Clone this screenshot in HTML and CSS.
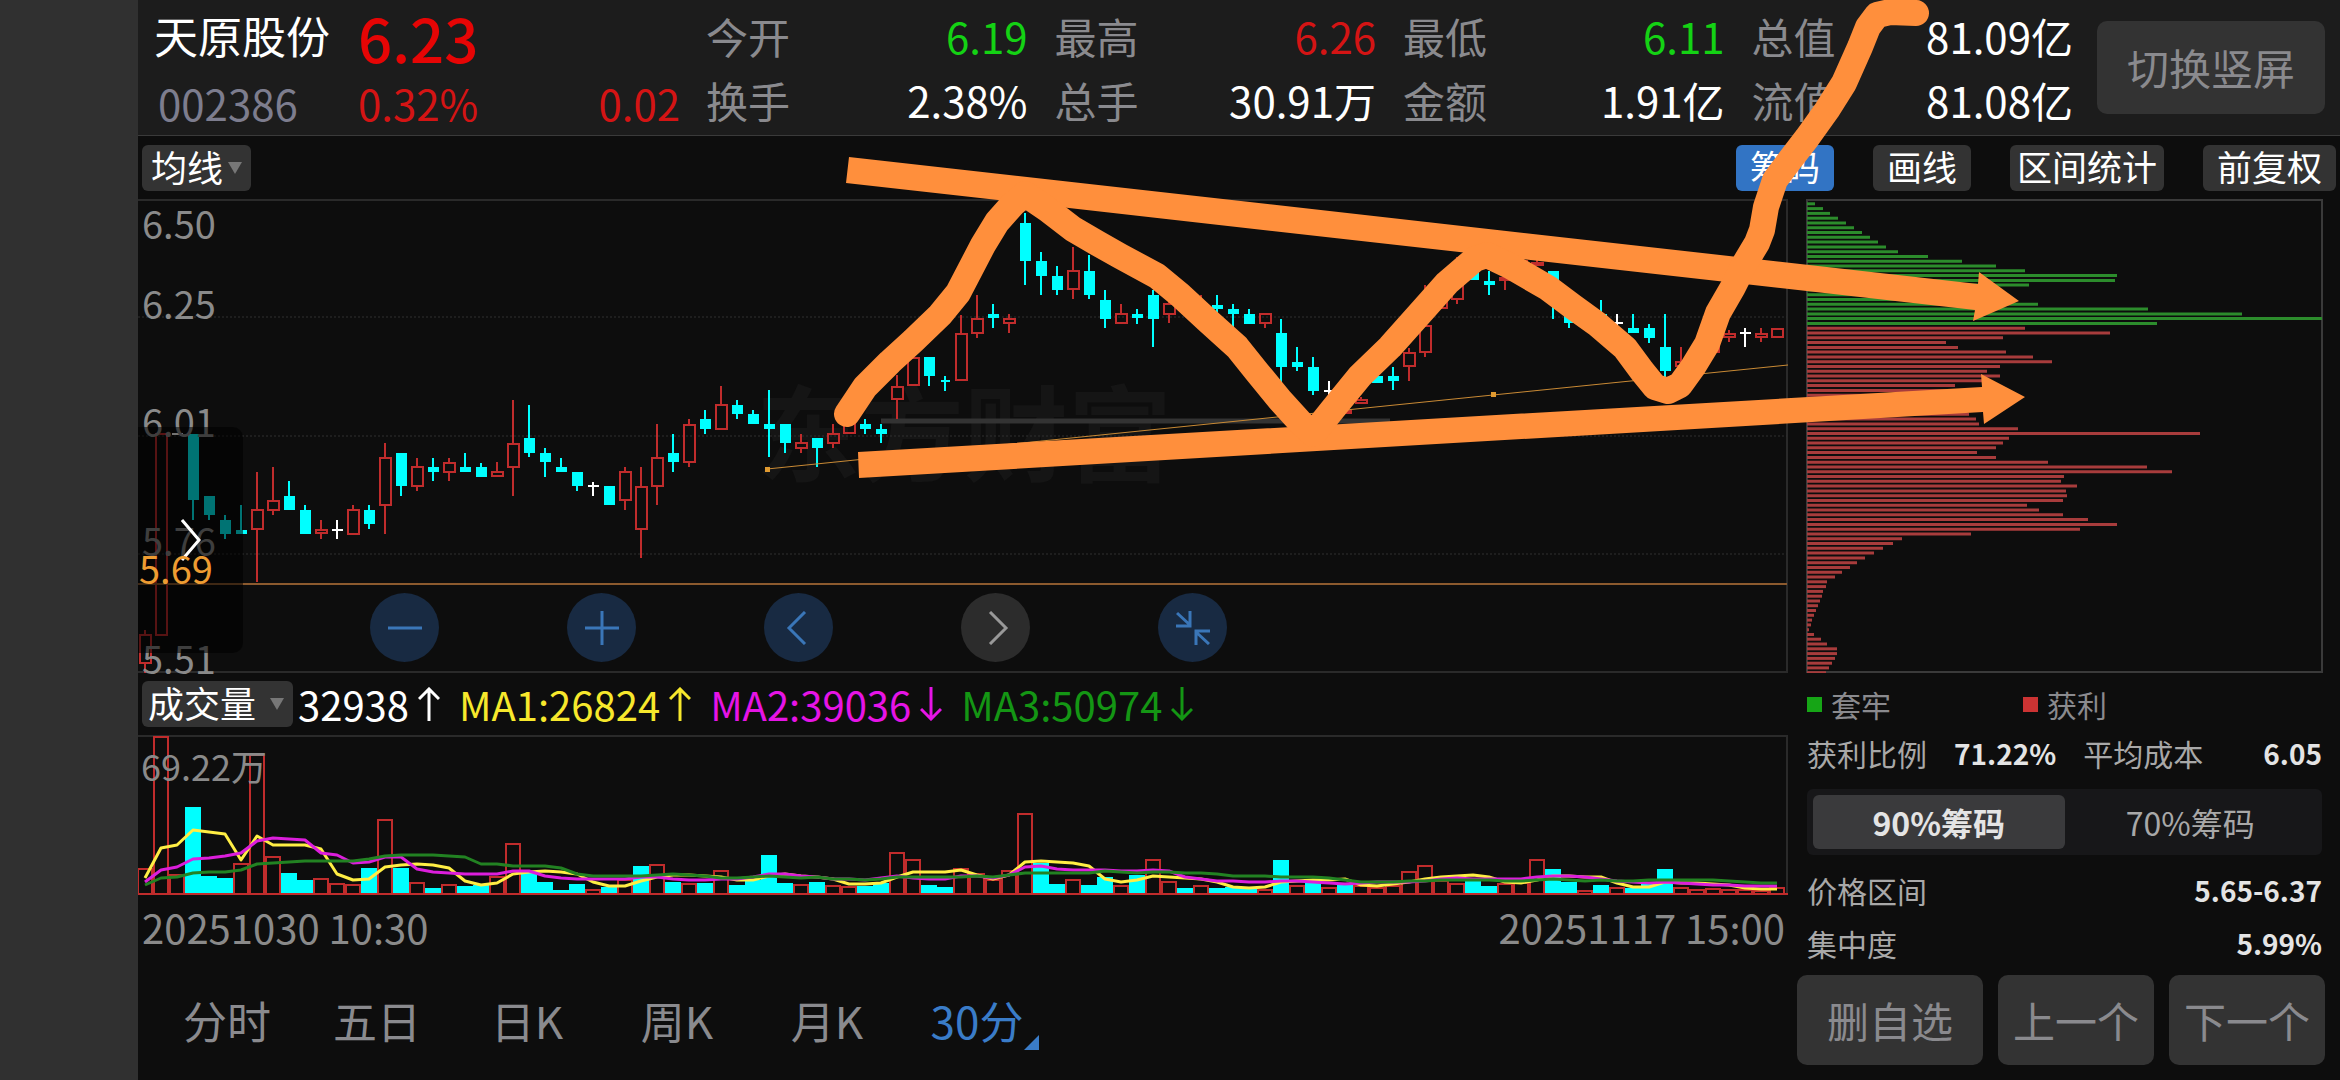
FILE: index.html
```html
<!DOCTYPE html>
<html lang="zh-CN">
<head>
    <meta charset="UTF-8">
    <meta name="viewport" content="width=device-width, initial-scale=1.0">
    <title>天原股份 002386</title>
    <link rel="stylesheet" href="styles.css">
</head>
<body>
    <div class="app">
        <main class="screen">
            <header class="header">
                <div class="stock">
                    <h1>天原股份</h1>
                    <span class="code">002386</span>
                </div>
                <div class="price">
                    <strong>6.23</strong>
                    <div class="change"><span>0.32%</span><span>0.02</span></div>
                </div>
                <div class="quotes">
                    <div class="quote"><span>今开</span><b class="down">6.19</b></div>
                    <div class="quote"><span>最高</span><b class="up">6.26</b></div>
                    <div class="quote"><span>最低</span><b class="down">6.11</b></div>
                    <div class="quote"><span>总值</span><b>81.09亿</b></div>
                    <div class="quote"><span>换手</span><b>2.38%</b></div>
                    <div class="quote"><span>总手</span><b>30.91万</b></div>
                    <div class="quote"><span>金额</span><b>1.91亿</b></div>
                    <div class="quote"><span>流值</span><b>81.08亿</b></div>
                </div>
                <button class="big-btn rotate-btn">切换竖屏</button>
            </header>

            <div class="toolbar">
                <div class="picker">
                    <select aria-label="主图指标"><option>均线</option></select>
                    <svg viewBox="0 0 14 12"><path d="M0 0h14L7 12z"/></svg>
                </div>
                <div class="tools">
                    <button class="tool active">筹码</button>
                    <button class="tool">画线</button>
                    <button class="tool wide">区间统计</button>
                    <button class="tool">前复权</button>
                </div>
            </div>

            <div class="content">
                <section class="left">
                    <div class="k-chart">
                        <svg id="k-svg" viewBox="138 199 1650 474" preserveAspectRatio="none">
                            <text class="watermark" x="756" y="474">东方财富</text>
                            <path class="frame" d="M138 200H1787V672H138"/>
                            <path class="grid" d="M138 317H1787M138 436H1787M138 554H1787"/>
                            <path class="band" d="M881 421H1390"/>
                            <g id="candles"></g>
                            <path class="cost-line" d="M138 584H1787"/>
                            <path class="trend" d="M767 469L1493 395L1788 365"/>
                            <path class="handle" d="M765 467h5v5h-5zM1491 392h5v5h-5z"/>
                        </svg>
                        <div class="axis">
                            <div><span>6.50</span><span>6.25</span></div>
                            <div><span>6.01</span></div>
                            <div><span>5.76</span></div>
                            <div><span>5.51</span></div>
                        </div>
                        <button class="drawer" aria-label="展开">
                            <svg viewBox="0 0 20 42"><path d="M1 1L18 21L1 41"/></svg>
                        </button>
                        <span class="cost">5.69</span>
                        <div class="zoom-bar">
                            <button aria-label="缩小"><svg viewBox="0 0 34 34"><path d="M0 17H34"/></svg></button>
                            <button aria-label="放大"><svg viewBox="0 0 34 34"><path d="M0 17H34M17 0V34"/></svg></button>
                            <button aria-label="左移"><svg viewBox="0 0 34 34"><path d="M23 1L7 17L23 33"/></svg></button>
                            <button aria-label="右移" class="off"><svg viewBox="0 0 34 34"><path d="M11 1L27 17L11 33"/></svg></button>
                            <button aria-label="收起"><svg viewBox="0 0 34 34"><path d="M1 2L14 14M14 0V15H0M33 33L20 21M20 34V20H34"/></svg></button>
                        </div>
                    </div>

                    <div class="ma-row">
                        <div class="picker vol-picker">
                            <select aria-label="副图指标"><option>成交量</option></select>
                            <svg viewBox="0 0 14 12"><path d="M0 0h14L7 12z"/></svg>
                        </div>
                        <span class="ma">32938<svg viewBox="0 0 22 34"><path d="M11 34V2M1 12L11 2L21 12"/></svg></span>
                        <span class="ma ma1">MA1:26824<svg viewBox="0 0 22 34"><path d="M11 34V2M1 12L11 2L21 12"/></svg></span>
                        <span class="ma ma2">MA2:39036<svg viewBox="0 0 22 34"><path d="M11 0V32M1 22L11 32L21 22"/></svg></span>
                        <span class="ma ma3">MA3:50974<svg viewBox="0 0 22 34"><path d="M11 0V32M1 22L11 32L21 22"/></svg></span>
                    </div>

                    <div class="vol-chart">
                        <svg viewBox="138 735 1650 160" preserveAspectRatio="none">
                            <path class="frame" d="M138 736H1787V895"/>
                            <g id="volumes"></g>
                            <g id="ma-lines"></g>
                        </svg>
                        <span class="vol-max">69.22万</span>
                    </div>

                    <div class="dates"><span>20251030 10:30</span><span>20251117 15:00</span></div>

                    <nav class="tabs">
                        <button>分时</button>
                        <button>五日</button>
                        <button>日K</button>
                        <button>周K</button>
                        <button>月K</button>
                        <button class="active">30分</button>
                    </nav>
                </section>

                <aside class="right">
                    <div class="chip-chart">
                        <svg id="chips" viewBox="1806 199 517 474" preserveAspectRatio="none">
                            <path class="chip-frame" d="M1807 200H2322V672H1807Z"/>
                        </svg>
                    </div>
                    <div class="chip-info">
                        <div class="legend"><span class="lose">套牢</span><span class="win">获利</span></div>
                        <div class="row ratio">
                            <span>获利比例</span><b>71.22%</b><span>平均成本</span><b>6.05</b>
                        </div>
                        <div class="segment">
                            <button class="active">90%筹码</button>
                            <button>70%筹码</button>
                        </div>
                        <div class="row"><span>价格区间</span><b>5.65-6.37</b></div>
                        <div class="row"><span>集中度</span><b>5.99%</b></div>
                    </div>
                    <div class="actions">
                        <button class="big-btn">删自选</button>
                        <button class="big-btn">上一个</button>
                        <button class="big-btn">下一个</button>
                    </div>
                </aside>
            </div>
        </main>

        <!-- hand-drawn marks over the whole screen -->
        <svg class="marks" viewBox="0 0 2340 1080" preserveAspectRatio="none">
            <path d="M849 157L1978 284L1979 272L2019 301L1973 321L1975 310L846 183Z"/>
            <path d="M858 452L1982 387L1981 374L2025 397L1984 424L1983 412L859 478Z"/>
            <polyline points="847,414 865,387 890,362 913,341 940,315 958,293 970,270 983,245 997,222 1013,204 1025,194 1047,209 1073,229 1097,243 1120,256 1157,276 1180,295 1207,320 1237,347 1257,372 1280,400 1300,422 1313,434 1333,409 1360,376 1390,347 1423,310 1447,283 1475,259 1487,255 1510,266 1548,288 1572,306 1597,324 1625,348 1642,371 1655,387 1668,391 1680,385 1693,367 1707,344 1718,313 1733,287 1745,263 1757,243 1762,230 1766,207 1775,180 1790,160 1807,138 1827,110 1844,83 1860,47 1868,27 1877,15 1890,12 1916,13"/>
        </svg>
    </div>
    <script src="script.js"></script>
</body>
</html>
```

FILE: styles.css
```css
:root {
    --bg: #0d0d0d;
    --panel: #1c1c1c;
    --btn: #333333;
    --line: #2a2a2a;
    --label: #8a8a8e;
    --red: #c02c2c;
    --cyan: #00ffff;
    --blue: #3a7cc8;
    --mark: #ff8f3c;
}

* {
    margin: 0;
    padding: 0;
    box-sizing: border-box;
}

body {
    background: #303030;
    color: #fff;
    font-family: "Noto Sans CJK SC", "Noto Sans", sans-serif;
}

button, select {
    font-family: inherit;
    border: none;
    color: inherit;
    cursor: pointer;
}

b {
    font-weight: 400;
}

.app {
    position: relative;
    display: flex;
    min-height: 100vh;
    padding-left: 138px;
    overflow: hidden;
}

.screen {
    flex: 1;
    min-width: 0;
    display: flex;
    flex-direction: column;
    background: var(--bg);
}

/* Header */
.header {
    display: flex;
    align-items: center;
    height: 136px;
    padding: 0 15px 0 16px;
    background: var(--panel);
    border-bottom: 1px solid #3a3a3a;
    font-size: 42px;
    line-height: 64px;
}

.stock {
    width: 204px;
}

.stock h1 {
    margin-bottom: 6px;
    font-size: 44px;
    font-weight: 400;
    line-height: 60px;
}

.code {
    padding-left: 4px;
    color: #7d7d8e;
}

.price {
    width: 322px;
    color: #d41414;
}

.price strong {
    display: block;
    margin-bottom: 2px;
    font-size: 60px;
    font-weight: 500;
    color: #e60505;
}

.stock, .price {
    padding-top: 4px;
}

.change {
    display: flex;
    justify-content: space-between;
}

.quotes {
    flex: 1;
    display: grid;
    grid-template-columns: repeat(4, 1fr);
    column-gap: 27px;
    margin: 0 24px 0 26px;
}

.quote {
    display: flex;
    justify-content: space-between;
    white-space: nowrap;
}

.quote span {
    color: var(--label);
}

.up {
    color: #d41414;
}

.down {
    color: #14d214;
}

.big-btn {
    height: 90px;
    padding-bottom: 2px;
    border-radius: 10px;
    background: var(--btn);
    color: var(--label);
    font-size: 42px;
}

.rotate-btn {
    width: 228px;
    height: 93px;
}

/* Toolbar */
.toolbar {
    display: flex;
    justify-content: space-between;
    align-items: center;
    height: 63px;
    padding: 0 4px;
}

.picker {
    position: relative;
}

.picker select {
    display: block;
    height: 46px;
    padding: 0 27px 4px 9px;
    border-radius: 6px;
    background: var(--btn);
    font-size: 36px;
    line-height: 42px;
    appearance: none;
}

.picker svg {
    position: absolute;
    right: 9px;
    top: 17px;
    width: 14px;
    height: 12px;
    fill: #777;
    pointer-events: none;
}

.tools {
    display: flex;
    gap: 39px;
}

.tool {
    height: 46px;
    padding: 0 14px 4px;
    border-radius: 6px;
    background: var(--btn);
    font-size: 35px;
    line-height: 42px;
}

.tool.wide {
    padding: 0 7px 4px;
}

.tool.active {
    background: #3274c4;
}

/* Content */
.content {
    flex: 1;
    display: grid;
    grid-template-columns: 1fr 552px;
}

.left, .right {
    display: flex;
    flex-direction: column;
    min-width: 0;
}

.k-chart, .vol-chart, .chip-chart {
    position: relative;
    min-height: 0;
}

.k-chart {
    flex: 474 1 0;
}

.vol-chart {
    flex: 160 1 0;
}

.k-chart > svg, .vol-chart > svg, .chip-chart > svg {
    position: absolute;
    inset: 0;
    width: 100%;
    height: 100%;
}

.frame {
    fill: none;
    stroke: var(--line);
    stroke-width: 2;
}

.grid {
    fill: none;
    stroke: #303030;
    stroke-dasharray: 2 2;
}

.watermark {
    font-size: 104px;
    font-weight: 700;
    fill: #151515;
}

.band {
    stroke: #333;
    stroke-width: 5;
}

.cost-line {
    stroke: #8c5a2e;
    stroke-width: 2;
}

.trend {
    fill: none;
    stroke: #c98a35;
}

.handle {
    fill: #e09a30;
}

.red {
    fill: none;
    stroke: var(--red);
    stroke-width: 2;
}

.cyan {
    fill: var(--cyan);
    stroke: var(--cyan);
    stroke-width: 2;
}

.white {
    fill: none;
    stroke: #fff;
    stroke-width: 2;
}

/* every price sits on the grid line below it */
.axis {
    position: absolute;
    inset: 0 auto 0 4px;
    display: grid;
    grid-template-rows: repeat(4, 1fr);
    color: #8a8a8a;
    font-size: 38px;
    line-height: 30px;
}

.axis div {
    display: flex;
    flex-direction: column;
    justify-content: flex-end;
}

.axis div:first-child {
    justify-content: space-between;
    padding-top: 9px;
}

.drawer {
    position: absolute;
    left: 0;
    top: 48%;
    width: 105px;
    height: 226px;
    border-radius: 0 10px 10px 0;
    background: rgba(0, 0, 0, 0.55);
}

.drawer svg {
    display: block;
    width: 20px;
    height: 42px;
    margin-left: 43px;
    fill: none;
    stroke: #fff;
    stroke-width: 3;
}

.cost {
    position: absolute;
    left: 1px;
    bottom: 90px;
    color: #ee9c32;
    font-size: 38px;
    line-height: 30px;
}

.zoom-bar {
    position: absolute;
    left: 232px;
    bottom: 11px;
    display: flex;
    gap: 128px;
}

.zoom-bar button {
    display: flex;
    align-items: center;
    justify-content: center;
    width: 69px;
    height: 69px;
    border-radius: 50%;
    background: #182a42;
    color: #3a76b8;
}

.zoom-bar .off {
    background: #2c2c2c;
    color: #999;
}

.zoom-bar svg {
    width: 34px;
    height: 34px;
    fill: none;
    stroke: currentColor;
    stroke-width: 3;
}

/* MA row */
.ma-row {
    display: flex;
    align-items: center;
    height: 62px;
    padding-left: 4px;
}

.vol-picker {
    margin-right: 5px;
}

.vol-picker select {
    padding: 0 36px 4px 6px;
}

.ma {
    display: flex;
    align-items: center;
    gap: 9px;
    margin-right: 19px;
    font-size: 40px;
    line-height: 62px;
}

.ma svg {
    width: 22px;
    height: 34px;
    fill: none;
    stroke: currentColor;
    stroke-width: 3;
}

.ma1 { color: #f7e82c; }
.ma2 { color: #e614e6; }
.ma3 { color: #149614; }

.vol-max {
    position: absolute;
    left: 3px;
    top: 10px;
    color: #8a8a8a;
    font-size: 36px;
    line-height: 40px;
}

.line {
    fill: none;
    stroke-width: 3;
    stroke-linejoin: round;
}

.line1 { stroke: #ffee44; }
.line2 { stroke: #dc1edc; }
.line3 { stroke: #228222; }

.dates {
    display: flex;
    justify-content: space-between;
    padding: 0 3px 0 4px;
    color: #8a8a8a;
    font-size: 40px;
    line-height: 65px;
}

.tabs {
    display: flex;
    align-items: center;
    height: 120px;
    padding-left: 14px;
}

.tabs button {
    position: relative;
    width: 150px;
    background: none;
    color: var(--label);
    font-size: 44px;
    line-height: 64px;
}

.tabs .active {
    color: var(--blue);
}

.tabs .active::after {
    content: '';
    position: absolute;
    right: 13px;
    bottom: 2px;
    border-left: 15px solid transparent;
    border-bottom: 15px solid var(--blue);
}

/* Chip distribution */
.chip-chart {
    flex: 1 1 0;
    margin: 0 17px 0 18px;
}

.chip-frame {
    fill: none;
    stroke: #3a3a3a;
    stroke-width: 2;
}

.lose-bar { fill: #2c8c2c; }
.win-bar { fill: #a83c3c; }

.chip-info {
    padding: 0 18px 14px 19px;
    color: #a8a8a8;
    font-size: 30px;
}

.legend {
    display: grid;
    grid-template-columns: 216px 1fr;
    color: var(--label);
    line-height: 62px;
}

.legend span {
    display: flex;
    align-items: center;
    gap: 9px;
}

.legend span::before {
    content: '';
    width: 15px;
    height: 15px;
}

.lose::before { background: #16a516; }
.win::before { background: #cc3333; }

.row {
    display: flex;
    justify-content: space-between;
    margin-top: 17px;
    line-height: 36px;
}

.row b {
    color: #e4e4e4;
    font-size: 28px;
    font-weight: 700;
}

.row.ratio {
    gap: 27px;
    margin: 0 0 18px;
}

.ratio b:last-child {
    margin-left: auto;
}

.segment {
    display: grid;
    grid-template-columns: 1fr 1fr;
    height: 66px;
    padding: 6px;
    border-radius: 6px;
    background: #171719;
}

.segment button {
    border-radius: 6px;
    background: none;
    font-size: 32px;
    line-height: 54px;
}

.segment .active {
    background: #3a3a3c;
    color: #e4e4e4;
    font-weight: 700;
}

.actions {
    display: grid;
    grid-template-columns: 186fr 156fr 156fr;
    gap: 15px;
    padding: 0 15px 15px 9px;
}

/* Marks */
.marks {
    position: absolute;
    inset: 0;
    width: 100%;
    height: 100%;
    fill: var(--mark);
    pointer-events: none;
}

.marks polyline {
    fill: none;
    stroke: var(--mark);
    stroke-width: 26;
    stroke-linecap: round;
    stroke-linejoin: round;
}
```

FILE: script.js
```js
const STEP = 16;
const FIRST_X = 145;

// type, high, body top, body bottom, low (r = up, c = down, w = flat)
const candles = [
    ['r',630,634,664,673],['r',433,433,636,636],['w',434,434,434,434],['c',434,434,500,520],
    ['c',496,496,515,520],['c',515,520,534,539],['c',505,530,534,534],['r',472,509,530,582],
    ['r',467,500,511,515],['c',481,496,510,510],['c',505,510,534,534],['r',520,529,534,539],
    ['w',520,530,530,539],['r',505,509,535,535],['c',505,510,524,529],['r',443,457,506,534],
    ['c',453,453,486,496],['r',458,466,487,491],['c',458,467,472,481],['r',458,462,473,481],
    ['c',453,467,472,472],['c',463,467,477,477],['r',462,471,477,477],['r',400,443,468,496],
    ['c',405,438,453,457],['c',448,453,462,477],['c',458,467,472,472],['c',472,472,486,491],
    ['w',482,486,486,496],['c',486,486,505,505],['r',467,471,501,510],['r',467,486,530,558],
    ['r',424,457,487,505],['c',434,453,462,472],['r',419,424,463,467],['c',410,419,429,434],
    ['r',386,404,430,430],['c',400,405,414,419],['c',410,414,424,424],['c',390,424,429,457],
    ['c',424,424,443,453],['r',434,442,449,453],['c',438,438,448,467],['r',424,433,444,448],
    ['r',415,420,434,434],['c',419,424,429,434],['c',424,429,434,443],['r',375,386,400,419],
    ['r',353,357,386,386],['c',357,357,376,386],['c',376,380,382,391],['r',315,333,381,381],
    ['r',295,318,334,338],['c',304,314,318,328],['r',314,318,324,333],['c',213,223,261,285],
    ['c',252,261,276,295],['c',266,276,290,295],['r',247,270,290,299],['c',255,271,295,299],
    ['c',290,300,319,328],['r',304,313,324,324],['c',309,314,318,324],['c',290,295,319,347],
    ['r',295,303,315,323],['r',300,302,306,306],['r',295,303,309,309],['c',295,305,309,314],
    ['c',304,309,314,328],['c',309,314,324,324],['r',313,313,324,328],['c',319,333,367,382],
    ['c',347,362,367,371],['c',357,367,391,395],['w',381,391,391,395],['r',405,410,414,414],
    ['r',397,399,404,404],['c',372,376,383,383],['c',367,376,381,390],['r',348,352,367,381],
    ['r',285,325,353,357],['r',290,295,309,309],['r',257,283,300,304],['c',268,272,280,280],
    ['c',271,281,285,295],['r',270,277,281,290],['r',258,260,264,264],['r',260,262,266,266],
    ['c',271,271,293,319],['c',312,316,323,328],['c',316,318,322,322],['c',300,314,319,319],
    ['w',314,323,323,327],['c',314,328,333,333],['c',324,328,338,343],['c',314,347,371,378],
    ['r',347,361,367,367],['r',352,355,360,360],['r',338,340,353,353],['r',330,333,338,342],
    ['w',328,333,333,347],['r',328,333,338,342],['r',328,328,338,338]
];

// top edge of every volume bar, then its colour
const volTops = [
    868,736,874,807,876,878,863,754,856,873,880,878,883,884,868,819,868,882,888,884,
    886,885,876,843,873,882,890,884,889,887,879,866,864,882,883,883,870,885,880,855,
    883,884,882,885,886,886,883,852,859,885,887,868,873,879,870,813,863,884,879,885,
    877,885,875,859,881,888,885,888,887,887,889,860,885,883,887,883,885,887,885,871,
    865,880,883,878,886,883,882,859,869,882,890,885,887,888,883,869,887,889,888,889,
    889,890,887
];
const volTypes =
    'rrrcccrrrc' + 'crrrcrcrcr' + 'ccrrccccrc' + 'rcrcrcrccc' + 'crcrrccrrc' +
    'crrrrrccrc' + 'crcrrcrccc' + 'rcrcrcrrrr' + 'rrrccrrrcc' + 'rcrcccrrrr' + 'rrr';

const maLines = [
    [878,848,845,830,832,834,860,836,845,845,845,849,874,880,879,867,865,864,865,868,881,885,883,874,872,871,872,874,882,886,886,881,877,875,875,876,877,880,880,876,874,876,877,879,884,884,883,877,872,872,872,870,875,879,875,862,861,862,863,866,879,882,880,876,877,878,879,882,887,888,887,882,881,880,880,879,885,886,884,882,879,877,876,875,877,882,883,880,876,876,877,877,883,887,887,882,883,883,884,885,888,889,889],
    [882,870,867,859,858,856,853,841,838,839,840,853,855,863,862,857,857,869,872,873,874,874,874,871,871,876,878,879,879,879,879,877,877,879,880,880,879,879,877,874,874,876,877,879,879,880,878,876,878,879,879,876,876,878,875,867,866,869,870,870,870,871,871,870,871,877,879,881,881,882,882,881,881,882,883,884,883,882,882,882,881,879,878,879,879,879,879,877,876,876,877,879,881,882,883,882,883,884,885,885,886,886,886],
    [885,878,877,873,872,872,870,864,863,862,861,861,861,861,859,856,855,855,855,856,857,864,864,866,866,866,868,874,876,876,876,876,875,874,875,876,878,878,877,876,877,878,877,879,879,880,879,877,877,877,877,877,876,877,875,873,873,873,873,873,871,872,873,872,872,873,873,874,876,876,876,877,877,877,878,880,882,882,882,881,881,880,880,880,880,881,881,880,879,880,881,880,881,881,880,880,880,880,880,881,882,883,883]
];

// bar lengths from the highest price down
const chips = [
    8,16,23,31,39,47,55,63,71,79,91,121,155,189,218,310,308,222,180,170,200,231,341,435,515,350,
    218,303,196,139,151,199,226,245,193,180,193,176,148,150,150,152,155,158,162,169,172,211,393,
    202,196,189,170,189,241,340,365,257,254,270,259,260,256,220,232,256,281,310,273,164,95,86,76,
    67,58,50,43,35,28,20,19,16,15,13,11,9,7,5,4,2,7,14,20,30,30,28,25,22,19
];
const LOSE_COUNT = 26;

function add(parent, d, cls) {
    const path = document.createElementNS('http://www.w3.org/2000/svg', 'path');
    path.setAttribute('d', d);
    path.setAttribute('class', cls);
    parent.appendChild(path);
}

const names = { r: 'red', c: 'cyan', w: 'white' };

const candleGroup = document.getElementById('candles');
candles.forEach(([type, high, top, bottom, low], i) => {
    const x = FIRST_X + i * STEP;
    let d = `M${x} ${high}V${top}M${x} ${bottom}V${low}`;
    if (type === 'w') {
        d += `M${x - 5} ${top}H${x + 6}`;
    } else if (type === 'r') {
        d += `M${x - 5} ${top + 1}H${x + 6}V${bottom - 1}H${x - 5}Z`;
    } else {
        d += `M${x - 4} ${top + 1}H${x + 5}V${bottom - 1}H${x - 4}Z`;
    }
    add(candleGroup, d, names[type]);
});

const volumeGroup = document.getElementById('volumes');
volTops.forEach((top, i) => {
    const x = FIRST_X + i * STEP;
    add(volumeGroup, `M${x - 7} ${top + 1}H${x + 7}V894H${x - 7}Z`, names[volTypes[i]]);
});
add(volumeGroup, 'M138 894H1788', 'red');

const maGroup = document.getElementById('ma-lines');
maLines.forEach((line, n) => {
    const d = 'M' + line.map((y, i) => `${FIRST_X + i * STEP} ${y}`).join('L');
    add(maGroup, d, `line line${n + 1}`);
});

const chipSvg = document.getElementById('chips');
chips.forEach((len, i) => {
    const y = (202.3 + i * 4.785).toFixed(1);
    add(chipSvg, `M1807 ${y}h${len}v3h-${len}z`, i < LOSE_COUNT ? 'lose-bar' : 'win-bar');
});
```
